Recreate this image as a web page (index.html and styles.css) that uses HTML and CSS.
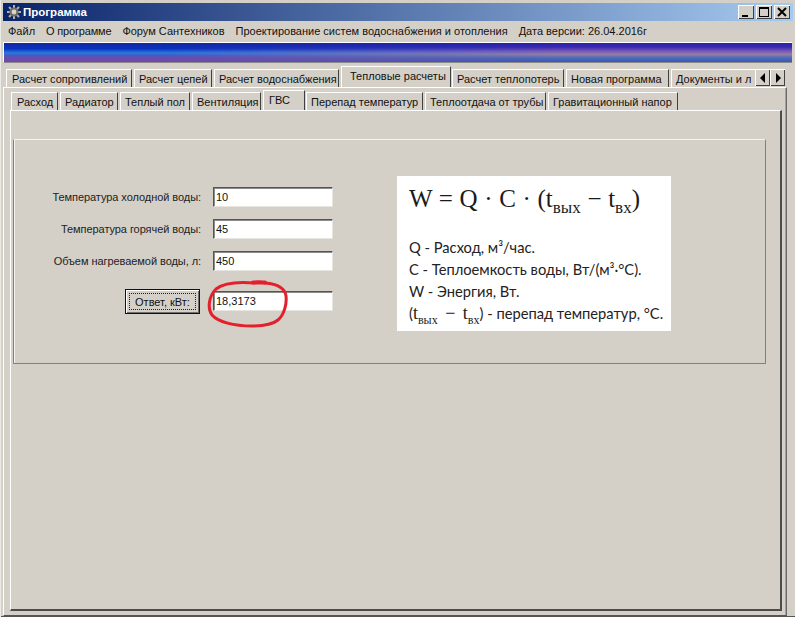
FILE: index.html
```
<!DOCTYPE html>
<html lang="ru">
<head>
<meta charset="utf-8">
<title>Программа</title>
<link rel="stylesheet" href="styles.css">
</head>
<body>
<div class="window">
  <header class="titlebar">
    <svg class="app-icon" viewBox="0 0 16 16" width="16" height="16">
      <g stroke="#b5b1a4" stroke-width="2">
        <path d="M8 1v14M1 8h14M3 3l10 10M13 3L3 13"/>
      </g>
      <circle cx="8" cy="8" r="4.6" fill="#6f6d66"/>
      <circle cx="8" cy="8" r="2.4" fill="#d8d6ce"/>
    </svg>
    <span class="title">Программа</span>
    <div class="win-buttons">
      <button class="win-btn"><svg viewBox="0 0 16 14" width="16" height="14"><path d="M4 10h6v2H4z"/></svg></button>
      <button class="win-btn"><svg viewBox="0 0 16 14" width="16" height="14"><path d="M3 2h10v10H3zM4 4v7h8V4z" fill-rule="evenodd"/></svg></button>
      <button class="win-btn win-close"><svg viewBox="0 0 16 14" width="16" height="14"><path d="M4 3l8 8M12 3l-8 8" stroke="#000" stroke-width="2"/></svg></button>
    </div>
  </header>
  <nav class="menu">
    <span>Файл</span>
    <span class="menu-tight">О программе</span>
    <span>Форум Сантехников</span>
    <span>Проектирование систем водоснабжения и отопления</span>
    <span>Дата версии: 26.04.2016г</span>
  </nav>
  <div class="band"></div>

  <div class="tabs tabs-outer">
    <div class="tab">Расчет сопротивлений</div>
    <div class="tab">Расчет цепей</div>
    <div class="tab">Расчет водоснабжения</div>
    <div class="tab active">Тепловые расчеты</div>
    <div class="tab">Расчет теплопотерь</div>
    <div class="tab">Новая программа</div>
    <div class="tab clipped">Документы и л</div>
  </div>
  <div class="scrollers">
    <button class="scroll-btn"><svg viewBox="0 0 8 10" width="8" height="10"><path d="M6 0v10L1 5z"/></svg></button>
    <button class="scroll-btn"><svg viewBox="0 0 8 10" width="8" height="10"><path d="M2 0v10l5-5z"/></svg></button>
  </div>

  <section class="outer-panel">
    <div class="tabs tabs-inner">
      <div class="tab">Расход</div>
      <div class="tab">Радиатор</div>
      <div class="tab">Теплый пол</div>
      <div class="tab">Вентиляция</div>
      <div class="tab active">ГВС</div>
      <div class="tab">Перепад температур</div>
      <div class="tab">Теплоотдача от трубы</div>
      <div class="tab">Гравитационный напор</div>
    </div>
    <div class="inner-panel">
      <div class="group">
        <form class="form">
          <label class="field-label">Температура холодной воды:</label>
          <div class="input">10</div>
          <label class="field-label">Температура горячей воды:</label>
          <div class="input">45</div>
          <label class="field-label">Объем нагреваемой воды, л:</label>
          <div class="input">450</div>
          <div class="answer-btn"><span class="answer-focus">Ответ, кВт:</span></div>
          <div class="input input-answer">18,3173</div>
        </form>
        <aside class="formula">
          <div class="equation">W = Q · C · (t<sub>вых</sub> − t<sub>вх</sub>)</div>
          <p class="legend">Q - Расход, м³/час.</p>
          <p class="legend">C - Теплоемкость воды, Вт/(м³·°C).</p>
          <p class="legend">W - Энергия, Вт.</p>
          <p class="legend">(<span class="serif">t<sub>вых</sub> − t<sub>вх</sub></span>) - перепад температур, °C.</p>
        </aside>
      </div>
    </div>
  </section>

  <svg class="scribble" viewBox="0 0 90 52" width="90" height="52">
    <path d="M51 6C39 5 22 5 13 12C6 19 4 31 9 38C15 45 31 49 49 49C61 49 69 48 75 43C81 38 84 27 83 19C82 11 74 7 62 6C58 5 54 4 51 6" fill="none" stroke="#e3202c" stroke-width="3" stroke-linecap="round"/>
    <path d="M50 5.500h12" stroke="#e3202c" stroke-width="4" stroke-linecap="round"/>
  </svg>
</div>
</body>
</html>
```
FILE: styles.css
```
* { box-sizing: border-box; }
html, body { margin: 0; height: 100%; }
body {
  width: 795px;
  height: 617px;
  overflow: hidden;
  background: #d4d0c8;
  font-family: "Liberation Sans", Arial, sans-serif;
  font-size: 11px;
  color: #111;
}
.window {
  position: relative;
  width: 795px;
  height: 617px;
  padding-top: 3px;
  box-shadow: inset 1px 0 0 #ecebe6, inset 0 -1px 0 #555;
}
.titlebar {
  display: flex;
  align-items: center;
  height: 18px;
  margin: 0 2px 0 3px;
  padding: 0 3px 0 3px;
  background: linear-gradient(90deg, #0a246a, #a6caf0);
  color: #fff;
}
.app-icon { flex: none; margin-right: 1px; }
.title { font-weight: 700; font-size: 11.5px; }
.win-buttons { display: flex; margin-left: auto; gap: 2px; }
.win-btn, .scroll-btn {
  display: flex;
  align-items: center;
  justify-content: center;
  width: 16px;
  height: 14px;
  padding: 0;
  background: #d4d0c8;
  border: 0;
  box-shadow: inset 1px 1px 0 #fff, inset -1px -1px 0 #404040;
}
.menu {
  display: flex;
  align-items: center;
  gap: 11px;
  height: 20px;
  padding-left: 8px;
  font-size: 11px;
}
.menu-tight { letter-spacing: -0.18px; }
.band {
  position: relative;
  height: 21px;
  margin: 1px 3px 0 3px;
  overflow: hidden;
  border-top: 1px solid #fff;
  border-left: 1px solid #fff;
  border-bottom: 1px solid #8a8a8a;
  background: linear-gradient(180deg, #1228a0 0%, #0a32be 30%, #2878e1 52%, #465abe 66%, #7846aa 85%, #694baf 100%);
}
.band::after {
  content: "";
  position: absolute;
  inset: 0;
  background: linear-gradient(180deg, #2a1fa8 0%, #3a2cb0 22%, #7f5bb8 45%, #8f7fa8 60%, #4a68b8 80%, #3a58b4 100%);
  -webkit-mask-image: linear-gradient(90deg, transparent 20%, #000 70%);
  mask-image: linear-gradient(90deg, transparent 20%, #000 70%);
}
.tabs { display: grid; align-items: end; }
.tabs-outer {
  grid-template-columns: 128px 80px 127px 111px 114px 105px 110px;
  width: 749px;
  height: 21px;
  margin: 3px 0 0 6px;
  overflow: hidden;
  white-space: nowrap;
}
.tab {
  height: 18px;
  padding: 2px 0 0 4px;
  margin-right: 2px;
  border-top: 1px solid #fff;
  border-left: 1px solid #fff;
  border-right: 1px solid #404040;
  font-size: 11px;
  line-height: 14px;
  overflow: hidden;
}
.tab:first-child { padding-left: 5px; }
.tab.active {
  position: relative;
  height: 21px;
  margin: 0 1px 0 0;
  padding: 2px 0 0 8px;
  background: #d4d0c8;
}
.scrollers {
  position: absolute;
  left: 755px;
  top: 69px;
  z-index: 2;
  display: flex;
}
.scroll-btn { width: 15px; height: 17px; }
.outer-panel {
  width: 784px;
  height: 529px;
  margin-left: 3px;
  padding: 4px 0 0 6px;
  border-top: 1px solid #fff;
  border-left: 1px solid #fff;
  border-right: 1px solid #6a6a6a;
  border-bottom: 1px solid #555;
  box-shadow: inset -1px 0 0 #a0a0a0;
}
.tabs-inner {
  grid-template-columns: 49px 60px 72px 71px 43px 119px 123px 132px;
  height: 18px;
  margin-left: 1px;
  white-space: nowrap;
}
.tabs-inner .tab.active {
  height: 20px;
  margin-top: -2px;
  padding-left: 5px;
}
.inner-panel {
  width: 772px;
  height: 501px;
  padding: 28px 0 0 2px;
  border-top: 1px solid #fff;
  border-left: 1px solid #fff;
  border-right: 2px solid #4c4c4c;
  border-bottom: 2px solid #4c4c4c;
}
.group {
  display: flex;
  align-items: flex-start;
  width: 753px;
  height: 225px;
  border-top: 1px solid #f4f3ef;
  border-left: 1px solid #808080;
  border-right: 1px solid #808080;
  border-bottom: 1px solid #808080;
  box-shadow: inset 1px 0 0 #f4f3ef;
}
.form {
  display: grid;
  grid-template-columns: 186px 120px;
  column-gap: 12px;
  row-gap: 12px;
  width: 318px;
  margin-top: 47px;
  margin-left: 1px;
  align-items: center;
}
.field-label { text-align: right; font-size: 11px; letter-spacing: -0.06px; color: #222; }
.input {
  height: 20px;
  padding: 2px 0 0 2px;
  background: #fff;
  border-top: 1px solid #555;
  border-left: 1px solid #555;
  border-right: 1px solid #e8e6e0;
  border-bottom: 1px solid #e8e6e0;
  box-shadow: inset 1px 1px 0 #8c8c8c;
  font-size: 11px;
  line-height: 15px;
}
.answer-btn {
  align-self: start;
  justify-self: end;
  width: 75px;
  height: 25px;
  margin-top: 6px;
  margin-right: 1px;
  padding: 3px;
  background: #d4d0c8;
  border: 1px solid #111;
  box-shadow: inset 1px 1px 0 #fff, inset -1px -1px 0 #6f6f6f;
}
.answer-focus {
  display: flex;
  align-items: center;
  justify-content: center;
  height: 17px;
  border: 1px dotted #222;
  font-size: 11px;
}
.input-answer { align-self: start; margin-top: 8px; }
.formula {
  width: 274px;
  height: 155px;
  margin: 36px 0 0 64px;
  padding: 5px 0 0 12px;
  background: #fff;
  font-family: "Lato", "Open Sans", sans-serif;
  color: #222;
}
.equation {
  height: 55px;
  font-family: "Liberation Serif", "DejaVu Serif", serif;
  font-size: 25px;
  line-height: 36px;
  word-spacing: 0.4px;
  white-space: nowrap;
  color: #1a1a1a;
}
.equation sub { font-size: 17px; line-height: 0; }
.legend {
  height: 22px;
  margin: 0;
  font-size: 14.7px;
  line-height: 22px;
  white-space: nowrap;
}
.serif { font-family: "Liberation Serif", serif; font-size: 18px; word-spacing: 3px; }
.legend sub { font-size: 12px; line-height: 0; }
.scribble {
  position: absolute;
  left: 203px;
  top: 277px;
  z-index: 3;
}
```
